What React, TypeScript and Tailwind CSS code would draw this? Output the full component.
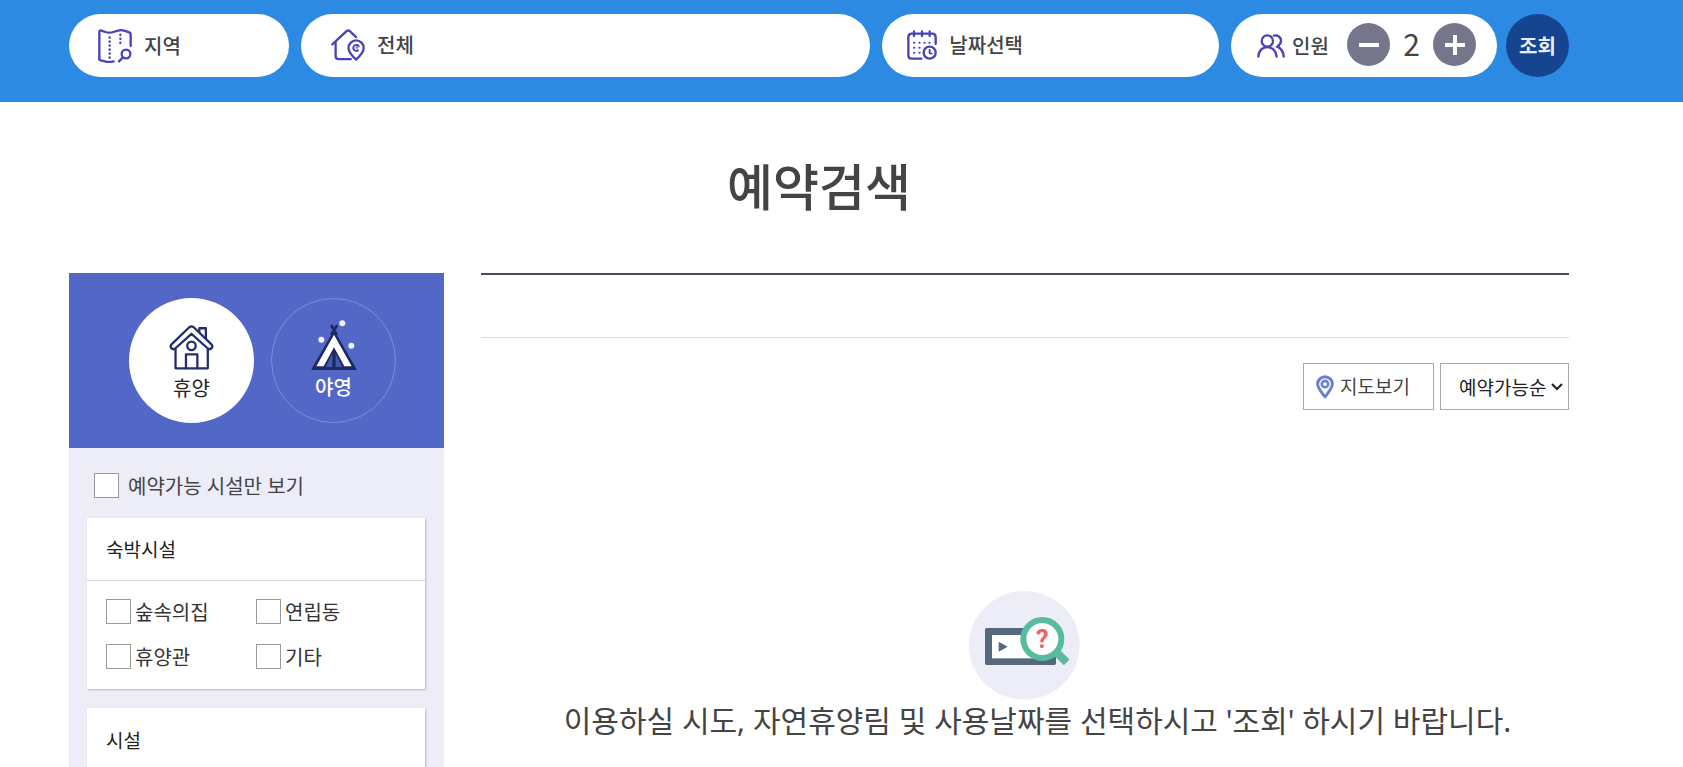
import { useState } from "react";

const LODGING = ["숲속의집", "연립동", "휴양관", "기타"];

const PILL = "flex h-[63px] items-center rounded-full bg-white text-left text-xl font-medium text-[#444]";
const CHECKBOX = "h-[25px] w-[25px] shrink-0 appearance-none border border-[#999] bg-white checked:bg-[#5368c7]";

function MapIcon() {
  return (
    <svg width="34" height="34" viewBox="0 0 102 102" fill="none" stroke="#4a43b8" strokeWidth="7" strokeLinecap="round" strokeLinejoin="round">
      <path d="M4 90V8Q4 4 8 4L22 9Q34 13 46 9L60 5Q68 2 78 5L94 10Q98 12 98 17V51" />
      <path d="M4 90Q4 93 8 94L24 98Q36 100 47 97" />
      <path d="M35 25V88M67 17V50" strokeDasharray="1 11" />
      <circle cx="84" cy="75" r="13" />
      <path d="M74 86L63 97" />
    </svg>
  );
}

function HousePinIcon() {
  return (
    <svg width="34" height="32" viewBox="0 0 103 96" fill="none" stroke="#4a43b8" strokeWidth="7" strokeLinecap="round" strokeLinejoin="round">
      <path d="M4 46L47 6Q52 2 57 6L76 24" />
      <path d="M14 40V82Q14 91 23 91H60" />
      <path d="M76 92C64 81 53 69 53 57A23 23 0 0 1 99 57C99 69 88 81 76 92Z" />
      <path d="M84 52A9 9 0 1 0 82 64" strokeWidth="6" />
      <circle cx="78" cy="56" r="1" strokeWidth="5" />
    </svg>
  );
}

function CalendarIcon() {
  return (
    <svg width="30" height="30" viewBox="0 0 90 90" fill="none" stroke="#4a43b8" strokeWidth="7" strokeLinecap="round" strokeLinejoin="round">
      <path d="M43 86H14Q4 86 4 76V22Q4 11 14 11H76Q86 11 86 22V42" />
      <path d="M21 4V18M45 4V18M68 4V18" />
      <path d="M21 38h1M37 38h1M52 38h1M67 38h1M21 53h1M37 53h1M21 68h1M37 68h1" strokeWidth="6" />
      <circle cx="68" cy="68" r="18" />
      <path d="M68 60V69L74 71" strokeWidth="6" />
    </svg>
  );
}

function PeopleIcon() {
  return (
    <svg width="28" height="24" viewBox="0 0 84 72" fill="none" stroke="#4a43b8" strokeWidth="7" strokeLinecap="round">
      <circle cx="31" cy="21" r="17" />
      <path d="M4 68C5 49 18 39 31 39S57 49 59 68" />
      <path d="M51 5C62 2 72 10 72 20C72 29 67 33 61 38C72 43 79 54 80 68" />
    </svg>
  );
}

function HouseIcon() {
  return (
    <svg width="45" height="45" viewBox="0 0 136 138" fill="none" stroke="#232d6b" strokeWidth="7" strokeLinecap="round" strokeLinejoin="round">
      <path d="M92 26V10H112V44" />
      <path d="M19 74V133H118V74" />
      <path d="M62 6L6 60Q2 66 6 71Q12 77 18 72L68 27L118 72Q124 77 130 71Q134 66 130 60L74 6Q68 2 62 6Z" fill="#fff" />
      <circle cx="68" cy="64" r="13" />
      <path d="M51 133V90H86V133" />
    </svg>
  );
}

function TentIcon() {
  return (
    <svg width="46" height="50" viewBox="0 0 138 150">
      <path d="M62 18L76 42M77 18L62 42" stroke="#1d2a60" strokeWidth="8" strokeLinecap="round" />
      <path d="M69 30L136 146Q138 150 133 150H5Q0 150 2 146Z" fill="#1d2a60" />
      <path d="M69 44L122 139H100L69 82L38 139H16Z" fill="#fff" />
      <path d="M64 101V141H44ZM74 101V141H94Z" fill="#4358ae" />
      <circle cx="94" cy="10" r="9" fill="#f1f1f3" />
      <circle cx="31" cy="59" r="9" fill="#f1f1f3" />
      <circle cx="121" cy="77" r="9" fill="#f1f1f3" />
    </svg>
  );
}

function PinIcon() {
  return (
    <svg width="18" height="24" viewBox="0 0 56 74" fill="none" stroke="#6a7fd0" strokeWidth="9">
      <path d="M28 68C16 52 5 40 5 28A23 23 0 0 1 51 28C51 40 40 52 28 68Z" strokeLinejoin="round" />
      <circle cx="28" cy="28" r="10" strokeWidth="8" />
    </svg>
  );
}

function EmptyIllustration() {
  return (
    <svg width="111" height="109" viewBox="0 0 333 327">
      <ellipse cx="166" cy="163" rx="166" ry="163" fill="#ecedf7" />
      <rect x="48" y="111" width="213" height="111" rx="5" fill="#54697c" />
      <rect x="69" y="132" width="171" height="70" fill="#fff" />
      <path d="M89 152L116 167L89 182Z" fill="#54697c" />
      <path d="M260 181L293 214" stroke="#58bb9d" strokeWidth="24" />
      <circle cx="220" cy="144" r="57" fill="#fff" stroke="#58bb9d" strokeWidth="18" />
      <text x="220" y="171" textAnchor="middle" fontSize="76" fontWeight="700" fill="#f0625f" fontFamily="Roboto, sans-serif">?</text>
    </svg>
  );
}

function SearchBar() {
  const [people, setPeople] = useState(2);
  return (
    <header className="flex gap-[9px] bg-[#2d8ae3] pt-[14px] pr-[114px] pb-[25px] pl-[69px]">
      <div className="grid flex-1 grid-cols-[220px_570fr_337fr_266px] gap-3">
        <button type="button" className={`${PILL} gap-3 pl-[29px]`}>
          <MapIcon />
          지역
        </button>
        <button type="button" className={`${PILL} gap-3 pb-[2px] pl-[30px]`}>
          <HousePinIcon />
          전체
        </button>
        <button type="button" className={`${PILL} gap-3 pb-[2px] pl-[25px]`}>
          <CalendarIcon />
          날짜선택
        </button>
        <div className={`${PILL} gap-[7px] pr-[21px] pl-[26px]`}>
          <PeopleIcon />
          인원
          <div className="ml-auto flex items-center pb-[2px]">
            <button
              type="button"
              aria-label="인원 감소"
              onClick={() => setPeople(Math.max(1, people - 1))}
              className="flex h-[43px] w-[43px] items-center justify-center rounded-full bg-[#76768b]"
            >
              <svg width="20" height="20" viewBox="0 0 20 20"><path d="M0 10H20" stroke="#fff" strokeWidth="4" /></svg>
            </button>
            <output className="w-[43px] pb-1 text-center text-3xl leading-none font-normal">{people}</output>
            <button
              type="button"
              aria-label="인원 증가"
              onClick={() => setPeople(people + 1)}
              className="flex h-[43px] w-[43px] items-center justify-center rounded-full bg-[#76768b]"
            >
              <svg width="20" height="20" viewBox="0 0 20 20"><path d="M0 10H20M10 0V20" stroke="#fff" strokeWidth="4" /></svg>
            </button>
          </div>
        </div>
      </div>
      <button type="button" className="h-[63px] w-[63px] rounded-full bg-[#164590] text-xl font-bold text-[#e8eefa]">
        조회
      </button>
    </header>
  );
}

function Sidebar() {
  return (
    <aside className="flex w-[375px] shrink-0 flex-col bg-[#ecedf7]">
      <div className="flex h-[175px] items-center justify-center gap-[17px] bg-[#5367c7] pl-3">
        <button type="button" className="flex h-[125px] w-[125px] flex-col items-center justify-end rounded-full bg-white pb-5 text-xl leading-[30px] text-[#222]">
          <HouseIcon />
          <span className="mt-[3px]">휴양</span>
        </button>
        <button type="button" className="flex h-[125px] w-[125px] flex-col items-center justify-end rounded-full border border-[#7b8ce8] pb-5 text-xl leading-[30px] font-medium text-white">
          <TentIcon />
          <span className="mt-[2px]">야영</span>
        </button>
      </div>

      <label className="flex items-center gap-[9px] px-[25px] pt-[23px] pb-[18px] text-xl leading-[29px] text-[#444]">
        <input type="checkbox" className={CHECKBOX} />
        <span className="pt-[2px] font-['Noto_Sans','Noto_Sans_CJK_KR',sans-serif] leading-[27px]">예약가능 시설만 보기</span>
      </label>

      <section className="mr-[19px] ml-[18px] bg-white shadow-[1px_1px_2px_#b5b5c0]">
        <h2 className="border-b border-[#d5d6de] px-[19px] text-[19px] leading-[62px] text-[#222]">숙박시설</h2>
        <div className="grid grid-cols-2 gap-y-5 px-[19px] pt-[18px] pb-5">
          {LODGING.map((name) => (
            <label key={name} className="flex h-[25px] items-center gap-1 text-xl text-[#333]">
              <input type="checkbox" className={CHECKBOX} />
              {name}
            </label>
          ))}
        </div>
      </section>

      <section className="mt-[19px] mr-[19px] ml-[18px] flex-1 bg-white shadow-[1px_1px_2px_#b5b5c0]">
        <h2 className="px-[19px] text-[19px] leading-[59px] text-[#222] pt-[2px]">시설</h2>
      </section>
    </aside>
  );
}

function Results() {
  return (
    <main className="min-w-0 flex-1 border-t-2 border-[#464b6b]">
      <div className="h-[63px] border-b border-[#ddd]" />
      <div className="flex justify-end gap-[6px] pt-[25px]">
        <button type="button" className="flex h-[47px] w-[131px] items-center gap-[6px] border border-[#a9a9a9] pl-3 text-[19px] text-[#444]">
          <PinIcon />
          지도보기
        </button>
        <div className="relative">
          <select aria-label="정렬" className="h-[47px] w-[129px] appearance-none border border-[#a9a9a9] bg-white pt-[2px] pl-[18px] text-[19px] text-[#222]">
            <option>예약가능순</option>
          </select>
          <svg className="pointer-events-none absolute top-5 right-[6px]" width="12" height="8" viewBox="0 0 12 8" fill="none" stroke="#222" strokeWidth="2">
            <path d="M1 1L6 6L11 1" />
          </svg>
        </div>
      </div>
      <div className="flex flex-col items-center pt-[181px] pr-[2px]">
        <EmptyIllustration />
        <p className="pl-[27px] font-['Noto_Sans','Noto_Sans_CJK_KR',sans-serif] text-3xl leading-[42px] whitespace-nowrap text-[#444]">
          이용하실 시도, 자연휴양림 및 사용날짜를 선택하시고 '조회' 하시기 바랍니다.
        </p>
      </div>
    </main>
  );
}

export default function App() {
  return (
    <div className="flex min-h-screen flex-col bg-white font-['Noto_Sans_CJK_KR',sans-serif]">
      <SearchBar />
      <h1 className="pt-[43px] pr-[114px] pb-[50px] pl-[69px] text-center text-[50px] leading-[78px] font-medium text-[#444]">예약검색</h1>
      <div className="flex flex-1 gap-[37px] pr-[114px] pl-[69px]">
        <Sidebar />
        <Results />
      </div>
    </div>
  );
}
